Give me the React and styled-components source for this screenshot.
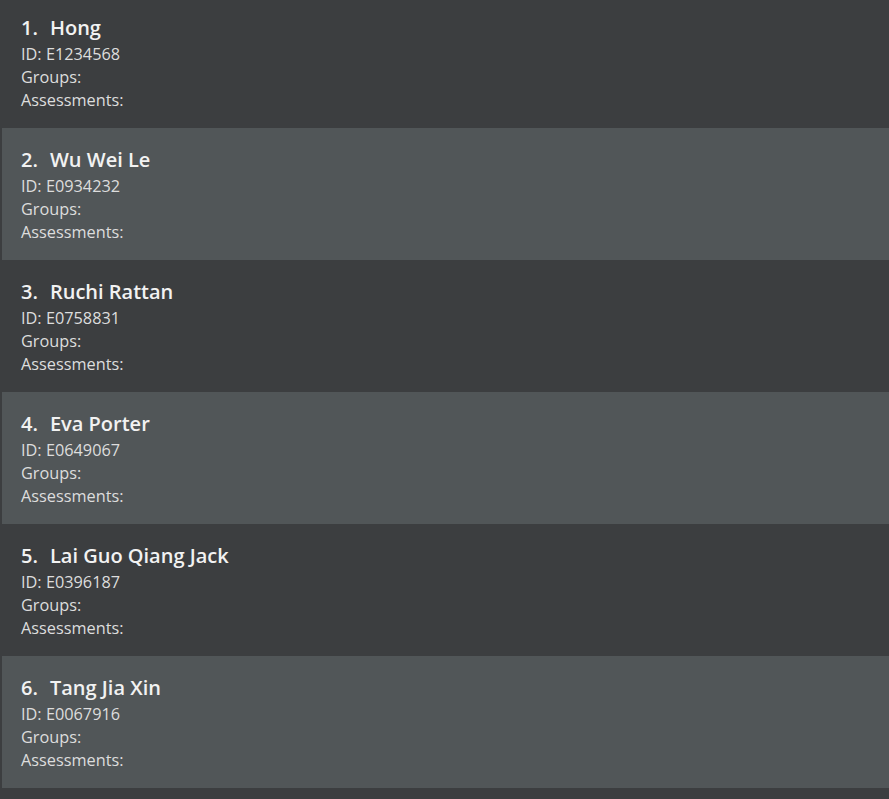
import React from "react";
import styled, { createGlobalStyle } from "styled-components";

const GlobalStyle = createGlobalStyle`
  html, body {
    margin: 0;
    padding: 0;
    background: #3c3e40;
    overflow: hidden;
  }
  body {
    font-family: "Open Sans", "Noto Sans", sans-serif;
  }
`;

const List = styled.div`
  margin-top: -4px;
  padding-left: 2px;
  display: flex;
  flex-direction: column;
`;

const Card = styled.div`
  box-sizing: border-box;
  height: 132px;
  padding: 18px 0 16px 19px;
  background: ${(props) => (props.alt ? "#515658" : "#3c3e40")};
`;

const Title = styled.div`
  font-size: 20px;
  line-height: 28px;
  font-weight: 600;
  color: #f2f2f2;
  white-space: pre;
  margin-bottom: 1px;
`;

const Index = styled.span`
  margin-right: 12px;
`;

const Line = styled.div`
  font-size: 16.3px;
  line-height: 23px;
  color: #dddddd;
`;

const people = [
  { name: "Hong", id: "E1234568" },
  { name: "Wu Wei Le", id: "E0934232" },
  { name: "Ruchi Rattan", id: "E0758831" },
  { name: "Eva Porter", id: "E0649067" },
  { name: "Lai Guo Qiang Jack", id: "E0396187" },
  { name: "Tang Jia Xin", id: "E0067916" },
];

export default function App() {
  return (
    <>
      <GlobalStyle />
      <List>
        {people.map((p, i) => (
          <Card key={p.id} alt={i % 2 === 1}>
            <Title>
              <Index>{i + 1}.</Index>
              {p.name}
            </Title>
            <Line>ID: {p.id}</Line>
            <Line>Groups:</Line>
            <Line>Assessments:</Line>
          </Card>
        ))}
      </List>
    </>
  );
}
